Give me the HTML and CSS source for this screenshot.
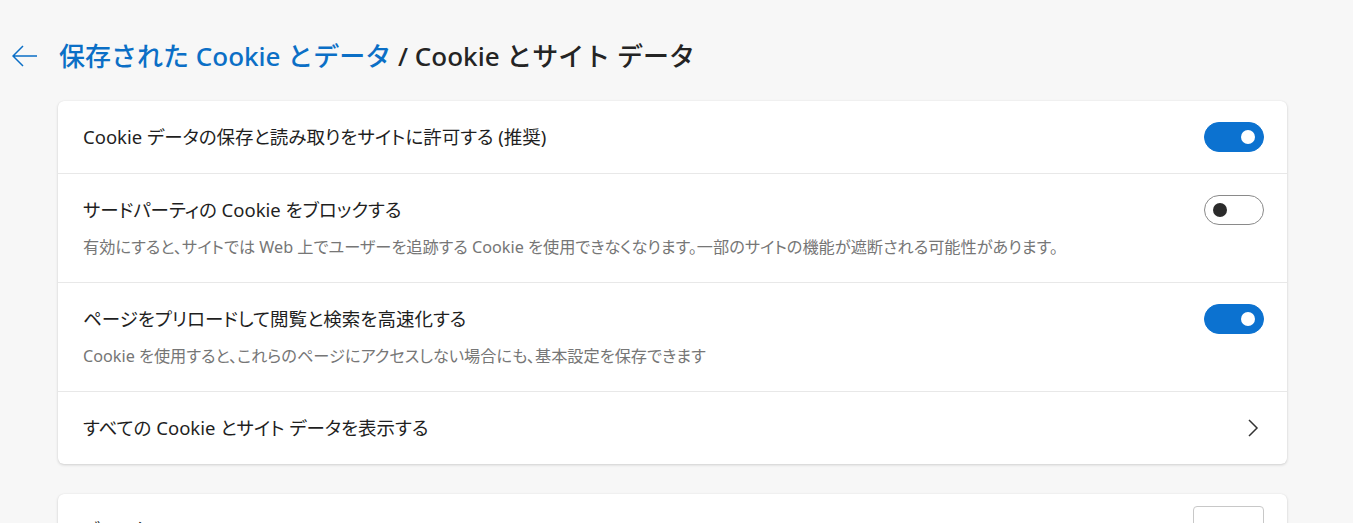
FILE: index.html
```html
<!DOCTYPE html>
<html lang="ja">
<head>
<meta charset="utf-8">
<title>Cookie とサイト データ</title>
<link rel="stylesheet" href="styles.css">
</head>
<body>
<div class="page">
  <header class="header">
    <button class="back" aria-label="戻る">
      <svg width="26" height="22" viewBox="0 0 26 22"><path d="M11 1 L1 11 L11 21 M1 11 H25" fill="none" stroke="#0b6fc6" stroke-width="1.5" stroke-linejoin="miter"/></svg>
    </button>
    <h1 class="title"><span class="crumb">保存された Cookie とデータ</span> / Cookie とサイト データ</h1>
  </header>

  <section class="card">
    <div class="row">
      <div class="row-head">
        <span class="row-title">Cookie データの保存と読み取りをサイトに許可する (推奨)</span>
        <span class="toggle on"><span class="knob"></span></span>
      </div>
    </div>
    <div class="row">
      <div class="row-head">
        <span class="row-title">サードパーティの Cookie をブロックする</span>
        <span class="toggle"><span class="knob"></span></span>
      </div>
      <p class="row-desc">有効にすると、サイトでは Web 上でユーザーを追跡する Cookie を使用できなくなります。一部のサイトの機能が遮断される可能性があります。</p>
    </div>
    <div class="row">
      <div class="row-head">
        <span class="row-title">ページをプリロードして閲覧と検索を高速化する</span>
        <span class="toggle on"><span class="knob"></span></span>
      </div>
      <p class="row-desc">Cookie を使用すると、これらのページにアクセスしない場合にも、基本設定を保存できます</p>
    </div>
    <div class="row">
      <div class="row-head">
        <span class="row-title">すべての Cookie とサイト データを表示する</span>
        <svg class="chevron" width="12" height="20" viewBox="0 0 12 20"><path d="M2 2 L10 10 L2 18" fill="none" stroke="#333" stroke-width="1.5"/></svg>
      </div>
    </div>
  </section>

  <section class="card">
    <div class="row">
      <div class="row-head">
        <span class="row-title">ブロック</span>
        <button class="btn">追加</button>
      </div>
    </div>
  </section>
</div>
</body>
</html>
```

FILE: styles.css
```css
html, body {
  margin: 0;
  padding: 0;
  background: #f7f7f7;
}
body {
  font-family: "Noto Sans", "Noto Sans CJK JP", sans-serif;
  color: #1f1f1f;
  overflow: hidden;
}
.page {
  padding: 36px 66px 0 58px;
}
.header {
  display: flex;
  align-items: center;
  height: 40px;
  margin-left: -46px;
  gap: 21px;
}
.back {
  border: 0;
  background: none;
  padding: 0;
  width: 26px;
  height: 22px;
  display: flex;
}
.title {
  margin: 0;
  font-size: 26px;
  font-weight: 500;
  line-height: 40px;
  color: #242424;
  white-space: nowrap;
}
.crumb {
  color: #0b6fc6;
}
.card {
  background: #fff;
  border-radius: 6px;
  box-shadow: 0 1px 3px rgba(0, 0, 0, 0.16), 0 0 1px rgba(0, 0, 0, 0.08);
  margin-top: 25px;
}
.card + .card {
  margin-top: 30px;
}
.row {
  padding: 21px 23px 21px 25px;
  border-top: 1px solid #e8e8e8;
}
.row:first-child {
  border-top: 0;
}
.row:has(.row-desc) {
  padding-bottom: 24px;
}
.row-head {
  display: flex;
  align-items: center;
  justify-content: space-between;
  height: 30px;
}
.row-title {
  font-size: 18.5px;
  line-height: 24px;
  color: #1f1f1f;
  font-feature-settings: "palt";
}
.row-desc {
  margin: 11px 0 0;
  font-size: 16.2px;
  line-height: 22px;
  color: #767676;
  font-feature-settings: "palt";
}
.toggle {
  height: 28px;
  border-radius: 15px;
  border: 1px solid #8a8a8a;
  display: flex;
  align-items: center;
  padding: 0 8px;
  flex: none;
  box-sizing: content-box;
  width: 42px;
}
.toggle .knob {
  width: 14px;
  height: 14px;
  border-radius: 50%;
  background: #2b2b2b;
}
.toggle.on {
  background: #0c72d0;
  border-color: #0c72d0;
  justify-content: flex-end;
}
.toggle.on .knob {
  background: #fff;
}
.chevron {
  margin-right: 5px;
}
.btn {
  font-family: inherit;
  font-size: 15px;
  width: 71px;
  height: 48px;
  flex: none;
  border: 1px solid #c8c8c8;
  border-radius: 4px;
  background: #fff;
  color: #1f1f1f;
}
```
